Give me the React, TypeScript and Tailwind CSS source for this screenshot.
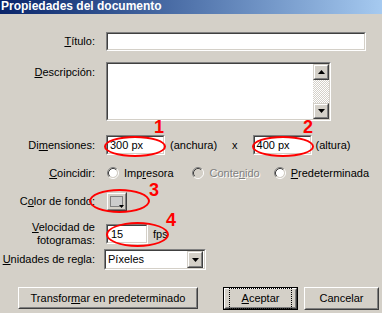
import React from "react";

const Sunken = ({ className = "", inner = "bg-white", children }: { className?: string; inner?: string; children?: React.ReactNode }) => (
  <div className={`border border-t-[#808080] border-l-[#808080] border-b-white border-r-white ${className}`}>
    <div className={`h-full w-full border border-t-[#404040] border-l-[#404040] border-b-[#d4d0c8] border-r-[#d4d0c8] ${inner}`}>
      {children}
    </div>
  </div>
);

const Raised = ({ className = "", inner = "", children }: { className?: string; inner?: string; children?: React.ReactNode }) => (
  <div className={`border border-t-[#d4d0c8] border-l-[#d4d0c8] border-b-[#404040] border-r-[#404040] bg-[#d4d0c8] ${className}`}>
    <div className={`h-full w-full border border-t-white border-l-white border-b-[#808080] border-r-[#808080] ${inner}`}>
      {children}
    </div>
  </div>
);

const Button = ({ className = "", children }: { className?: string; children?: React.ReactNode }) => (
  <div className={`border border-t-white border-l-white border-b-[#404040] border-r-[#404040] bg-[#d4d0c8] ${className}`}>
    <div className="h-full w-full border border-t-[#d4d0c8] border-l-[#d4d0c8] border-b-[#808080] border-r-[#808080] flex items-center justify-center">
      {children}
    </div>
  </div>
);

const Arrow = ({ up = false }: { up?: boolean }) => (
  <svg width="7" height="4" viewBox="0 0 7 4" className="block">
    {up ? <path d="M3.5 0 L7 4 L0 4 Z" fill="#000" /> : <path d="M0 0 L7 0 L3.5 4 Z" fill="#000" />}
  </svg>
);

const Radio = ({ disabled = false }: { disabled?: boolean }) => (
  <svg width="12" height="12" viewBox="0 0 12 12" className="block shrink-0">
    <circle cx="6" cy="6" r="4" fill={disabled ? "#d4d0c8" : "#ffffff"} />
    <path d="M2.11 9.89 A5.5 5.5 0 0 1 9.89 2.11" fill="none" stroke="#808080" strokeWidth="1" />
    <path d="M9.89 2.11 A5.5 5.5 0 0 1 2.11 9.89" fill="none" stroke="#ffffff" strokeWidth="1" />
    <path d="M2.82 9.18 A4.5 4.5 0 0 1 9.18 2.82" fill="none" stroke="#404040" strokeWidth="1" />
    <path d="M9.18 2.82 A4.5 4.5 0 0 1 2.82 9.18" fill="none" stroke="#d4d0c8" strokeWidth="1" />
  </svg>
);

const Label = ({ children, className = "" }: { children: React.ReactNode; className?: string }) => (
  <div className={`w-[96px] shrink-0 text-right pr-[1px] ${className}`}>{children}</div>
);

export default function App() {
  return (
    <div className="w-[382px] h-[313px] overflow-hidden relative bg-[#d4d0c8] text-black text-[11px] leading-[13px] font-['Liberation_Sans',Arial,sans-serif]">
      <div className="h-[14px] bg-gradient-to-r from-[#0a246a] to-[#a6caf0] text-white font-bold text-[12px] leading-[12px] pl-[1px] overflow-hidden">
        Propiedades del documento
      </div>

      <div className="flex flex-col">
        {/* Título */}
        <div className="mt-[18px] h-[19px] flex items-center">
          <Label><u>T</u>ítulo:</Label>
          <Sunken className="ml-[10px] w-[260px] h-[19px]" />
        </div>

        {/* Descripción */}
        <div className="mt-[11px] flex items-start">
          <Label className="pt-[4px]"><u>D</u>escripción:</Label>
          <Sunken className="ml-[10px] w-[225px] h-[59px]" inner="bg-white flex justify-end">
            <div className="w-[16px] h-full flex flex-col">
              <Raised className="w-[16px] h-[16px] shrink-0" inner="flex items-center justify-center">
                <Arrow up />
              </Raised>
              <div className="flex-1 bg-[repeating-conic-gradient(#ffffff_0%_25%,#d4d0c8_0%_50%)] bg-[length:2px_2px]" />
              <Raised className="w-[16px] h-[16px] shrink-0" inner="flex items-center justify-center">
                <Arrow />
              </Raised>
            </div>
          </Sunken>
        </div>

        {/* Dimensiones */}
        <div className="mt-[14px] h-[20px] flex items-center">
          <Label>Di<u>m</u>ensiones:</Label>
          <Sunken className="ml-[10px] w-[59px] h-[20px]" inner="bg-white flex items-center pl-[2px]">300 px</Sunken>
          <span className="ml-[5px]">(anchura)</span>
          <span className="ml-[15px]">x</span>
          <Sunken className="ml-[15px] w-[59px] h-[20px]" inner="bg-white flex items-center pl-[2px]">400 px</Sunken>
          <span className="ml-[4px]">(altura)</span>
        </div>

        {/* Coincidir */}
        <div className="mt-[11px] h-[14px] flex items-center">
          <Label><u>C</u>oincidir:</Label>
          <div className="ml-[11px]"><Radio /></div>
          <span className="ml-[5px]">Imp<u>r</u>esora</span>
          <div className="ml-[18px]"><Radio disabled /></div>
          <span className="ml-[6px] text-[#808080] [text-shadow:1px_1px_0_#ffffff]">Conte<u>n</u>ido</span>
          <div className="ml-[14px]"><Radio /></div>
          <span className="ml-[5px]"><u>P</u>redeterminada</span>
        </div>

        {/* Color de fondo */}
        <div className="mt-[12px] h-[19px] flex items-center">
          <Label>C<u>o</u>lor de fondo:</Label>
          <Raised className="ml-[10px] w-[21px] h-[19px] relative" inner="p-[2px]">
            <div className="w-full h-full border border-[#808080] bg-[#cccccc]" />
            <svg width="5" height="3" viewBox="0 0 5 3" className="absolute right-[2px] bottom-[2px]">
              <path d="M0 0 L5 0 L2.5 3 Z" fill="#000" />
            </svg>
          </Raised>
        </div>

        {/* Velocidad */}
        <div className="mt-[10px] h-[26px] flex items-center">
          <Label><u>V</u>elocidad de<br />fotogramas:</Label>
          <Sunken className="ml-[10px] w-[42px] h-[20px]" inner="bg-white flex items-center pl-[3px]">15</Sunken>
          <span className="ml-[5px]">fps</span>
        </div>

        {/* Unidades */}
        <div className="mt-[2px] h-[21px] flex items-center">
          <Label><u>U</u>nidades de regla:</Label>
          <Sunken className="ml-[8px] w-[102px] h-[21px]" inner="bg-white flex items-center pl-[2px] pr-[1px]">
            <span className="flex-1">Píxeles</span>
            <Raised className="w-[16px] h-[17px]" inner="flex items-center justify-center">
              <Arrow />
            </Raised>
          </Sunken>
        </div>

        {/* Buttons */}
        <div className="mt-[17px] h-[22px] flex items-center">
          <Button className="ml-[18px] w-[180px] h-[22px]">Transfor<u>m</u>ar en predeterminado</Button>
          <div className="ml-[25px] w-[75px] h-[23px] border border-black">
            <Button className="w-full h-full">
              <span className="outline-1 outline-dotted outline-black outline-offset-[3px] px-[9px]"><u>A</u>ceptar</span>
            </Button>
          </div>
          <Button className="ml-[6px] w-[75px] h-[23px]">Cancelar</Button>
        </div>
      </div>

      {/* red annotations */}
      <div className="absolute left-[104px] top-[136px] w-[62px] h-[21px] border-2 border-[#ff0000] rounded-[50%]" />
      <div className="absolute left-[252px] top-[136px] w-[62px] h-[21px] border-2 border-[#ff0000] rounded-[50%]" />
      <div className="absolute left-[89px] top-[189px] w-[61px] h-[24px] border-2 border-[#ff0000] rounded-[50%]" />
      <div className="absolute left-[106px] top-[222px] w-[63px] h-[25px] border-2 border-[#ff0000] rounded-[50%]" />
      <span className="absolute left-[154px] top-[118px] text-[#ff0000] font-bold text-[18px] leading-[18px]">1</span>
      <span className="absolute left-[303px] top-[118px] text-[#ff0000] font-bold text-[18px] leading-[18px]">2</span>
      <span className="absolute left-[149px] top-[181px] text-[#ff0000] font-bold text-[18px] leading-[18px]">3</span>
      <span className="absolute left-[166px] top-[211px] text-[#ff0000] font-bold text-[18px] leading-[18px]">4</span>
    </div>
  );
}
